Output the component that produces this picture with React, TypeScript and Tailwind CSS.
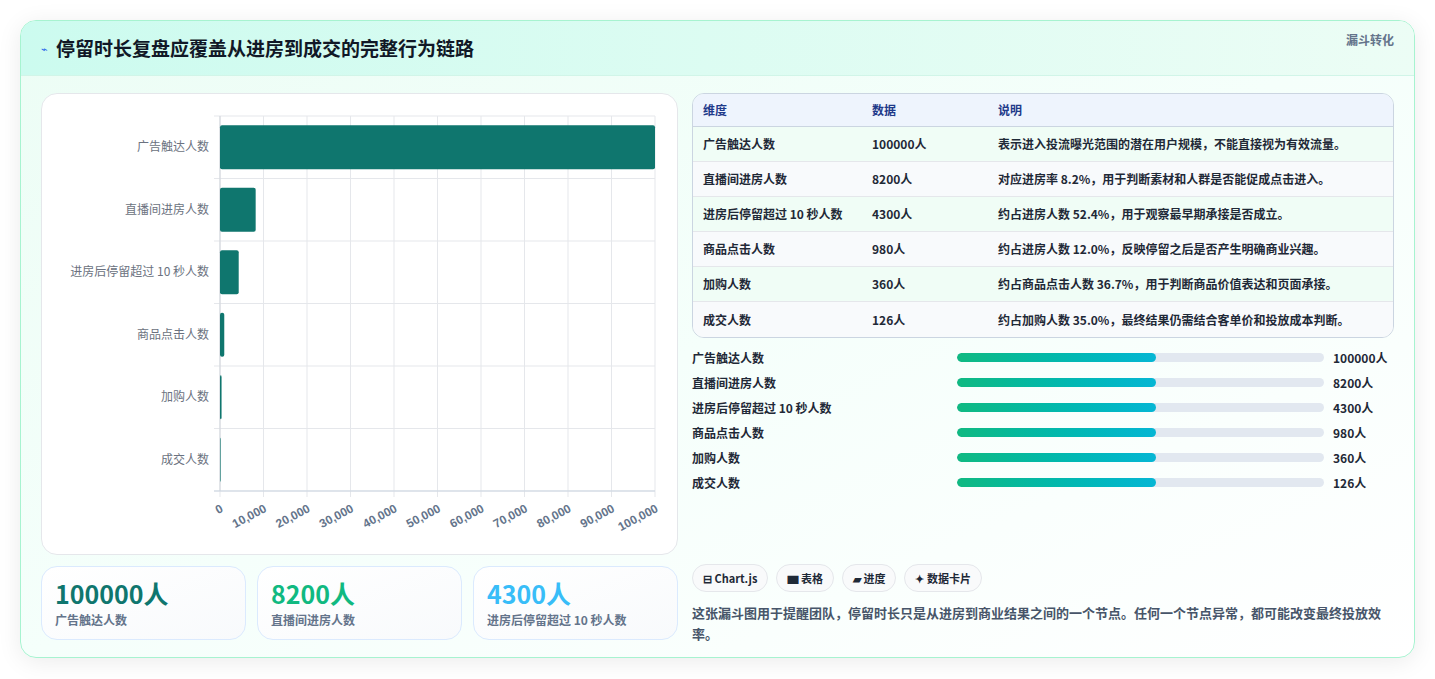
import React from "react";

const rows = [
  ["广告触达人数", 100000, "表示进入投流曝光范围的潜在用户规模，不能直接视为有效流量。"],
  ["直播间进房人数", 8200, "对应进房率 8.2%，用于判断素材和人群是否能促成点击进入。"],
  ["进房后停留超过 10 秒人数", 4300, "约占进房人数 52.4%，用于观察最早期承接是否成立。"],
  ["商品点击人数", 980, "约占进房人数 12.0%，反映停留之后是否产生明确商业兴趣。"],
  ["加购人数", 360, "约占商品点击人数 36.7%，用于判断商品价值表达和页面承接。"],
  ["成交人数", 126, "约占加购人数 35.0%，最终结果仍需结合客单价和投放成本判断。"],
] as const;

function Chart() {
  const x0 = 178, x1 = 613, y0 = 22, y1 = 397;
  const rh = (y1 - y0) / 6;
  const ticks = Array.from({ length: 11 }, (_, i) => i);
  return (
    <svg width="637" height="461" className="block">
      {ticks.map((i) => {
        const x = x0 + ((x1 - x0) * i) / 10;
        return <line key={i} x1={x} x2={x} y1={y0} y2={y1 + 6} stroke="#e5e7eb" />;
      })}
      {Array.from({ length: 7 }, (_, i) => (
        <line key={i} x1={x0 - 6} x2={x1} y1={y0 + rh * i} y2={y0 + rh * i} stroke="#e5e7eb" />
      ))}
      <line x1={x0} x2={x0} y1={y0} y2={y1} stroke="#d1d5db" />
      <line x1={x0 - 6} x2={x1} y1={y1} y2={y1} stroke="#cbd5e1" />
      {rows.map(([l, v], i) => {
        const cy = y0 + rh * i + rh / 2;
        const w = ((x1 - x0) * v) / 100000;
        return (
          <g key={i}>
            <rect x={x0} y={cy - 22} width={Math.max(w, 0.6)} height={44} rx={2} fill="#0f766e" />
            <text x={x0 - 11} y={cy + 4} textAnchor="end" fontSize="12" fill="#6b7280" fontFamily="'Noto Sans CJK SC', sans-serif">{l}</text>
          </g>
        );
      })}
      {ticks.map((i) => {
        const x = x0 + ((x1 - x0) * i) / 10;
        return (
          <text key={i} x={x + 4} y={y1 + 20} textAnchor="end" fontSize="12" fontWeight="600" fill="#64748b" fontFamily="'Liberation Sans', sans-serif" transform={`rotate(-28 ${x + 4} ${y1 + 20})`}>
            {i === 0 ? "0" : (i * 10000).toLocaleString("en-US")}
          </text>
        );
      })}
    </svg>
  );
}

export default function App() {
  return (
    <div className="w-[1435px] h-[679px] bg-white p-5 pb-0" style={{ fontFamily: "'Noto Sans CJK SC', 'Noto Sans', sans-serif" }}>
      <div className="rounded-2xl border border-[#a7f3d0] overflow-hidden shadow-[0_4px_24px_rgba(0,0,0,0.08)] bg-gradient-to-br from-[#ecfdf5] via-[#f5fffb] to-white h-[638px]">
        <div className="h-[55px] flex items-center justify-between px-5 bg-gradient-to-r from-[#ccfbef] to-[#ecfdf5] border-b border-[#d1f5e8]">
          <div className="flex items-center gap-2">
            <span className="text-[11px] text-[#2563eb]">⌁</span>
            <h1 className="text-[19px] font-bold text-[#111827]">停留时长复盘应覆盖从进房到成交的完整行为链路</h1>
          </div>
          <span className="text-[12px] font-bold text-[#64748b] -mt-4">漏斗转化</span>
        </div>
        <div className="flex gap-[14px] px-5 pt-[17px]">
          <div className="w-[637px] flex flex-col gap-[11px]">
            <div className="bg-white rounded-2xl border border-[#e5e7eb] h-[462px] overflow-hidden">
              <Chart />
            </div>
            <div className="grid grid-cols-3 gap-[11px]">
              {[["100000人", "text-[#0f766e]", "广告触达人数"], ["8200人", "text-[#10b981]", "直播间进房人数"], ["4300人", "text-[#38bdf8]", "进房后停留超过 10 秒人数"]].map(([v, c, l]) => (
                <div key={l} className="h-[74px] rounded-2xl border border-[#dbeafe] bg-gradient-to-br from-white to-[#f8fafc] px-[13px] pt-[9px]">
                  <div className={`text-[25px] font-bold leading-[34px] ${c}`}>{v}</div>
                  <div className="text-[12px] font-semibold text-[#64748b] mt-[1px]">{l}</div>
                </div>
              ))}
            </div>
          </div>
          <div className="w-[704px] flex flex-col">
            <div className="rounded-xl border border-[#cbd5e1] overflow-hidden text-[12px]">
              <div className="grid grid-cols-[169px_126px_1fr] h-[33px] items-center bg-[#eef4fd] text-[#1e3a8a] font-semibold px-[10px] border-b border-[#cbd5e1]">
                <div>维度</div><div>数据</div><div>说明</div>
              </div>
              {rows.map(([l, v, d], i) => (
                <div key={l} className={`grid grid-cols-[169px_126px_1fr] h-[35px] items-center px-[10px] text-[#1f2937] font-semibold ${i < 5 ? "border-b border-[#e5e7eb]" : ""} ${i % 2 ? "bg-[#f8fafc]" : "bg-[#f0fdf6]"}`}>
                  <div>{l}</div><div>{v}人</div><div>{d}</div>
                </div>
              ))}
            </div>
            <div className="flex flex-col mt-[7px]">
              {rows.map(([l, v]) => (
                <div key={l} className="h-[25px] flex items-center text-[12px] font-semibold text-[#1f2937]">
                  <div className="w-[265px]">{l}</div>
                  <div className="w-[367px] h-[9px] rounded-full bg-[#e2e8f0] overflow-hidden">
                    <div className="h-full w-[199px] rounded-full bg-gradient-to-r from-[#10b981] to-[#06b6d4]" />
                  </div>
                  <div className="ml-[9px]">{v}人</div>
                </div>
              ))}
            </div>
            <div className="flex gap-[8px] mt-[69px]">
              {["⊟ Chart.js", "▆ 表格", "▰ 进度", "✦ 数据卡片"].map((t) => (
                <span key={t} className="h-[28px] px-[10px] flex items-center rounded-full border border-[#e5e7eb] bg-[#f9fafb] text-[11px] font-semibold text-[#1f2937]">{t}</span>
              ))}
            </div>
            <p className="mt-[10px] text-[13px] leading-[21px] font-semibold text-[#475569]">这张漏斗图用于提醒团队，停留时长只是从进房到商业结果之间的一个节点。任何一个节点异常，都可能改变最终投放效率。</p>
          </div>
        </div>
      </div>
    </div>
  );
}
